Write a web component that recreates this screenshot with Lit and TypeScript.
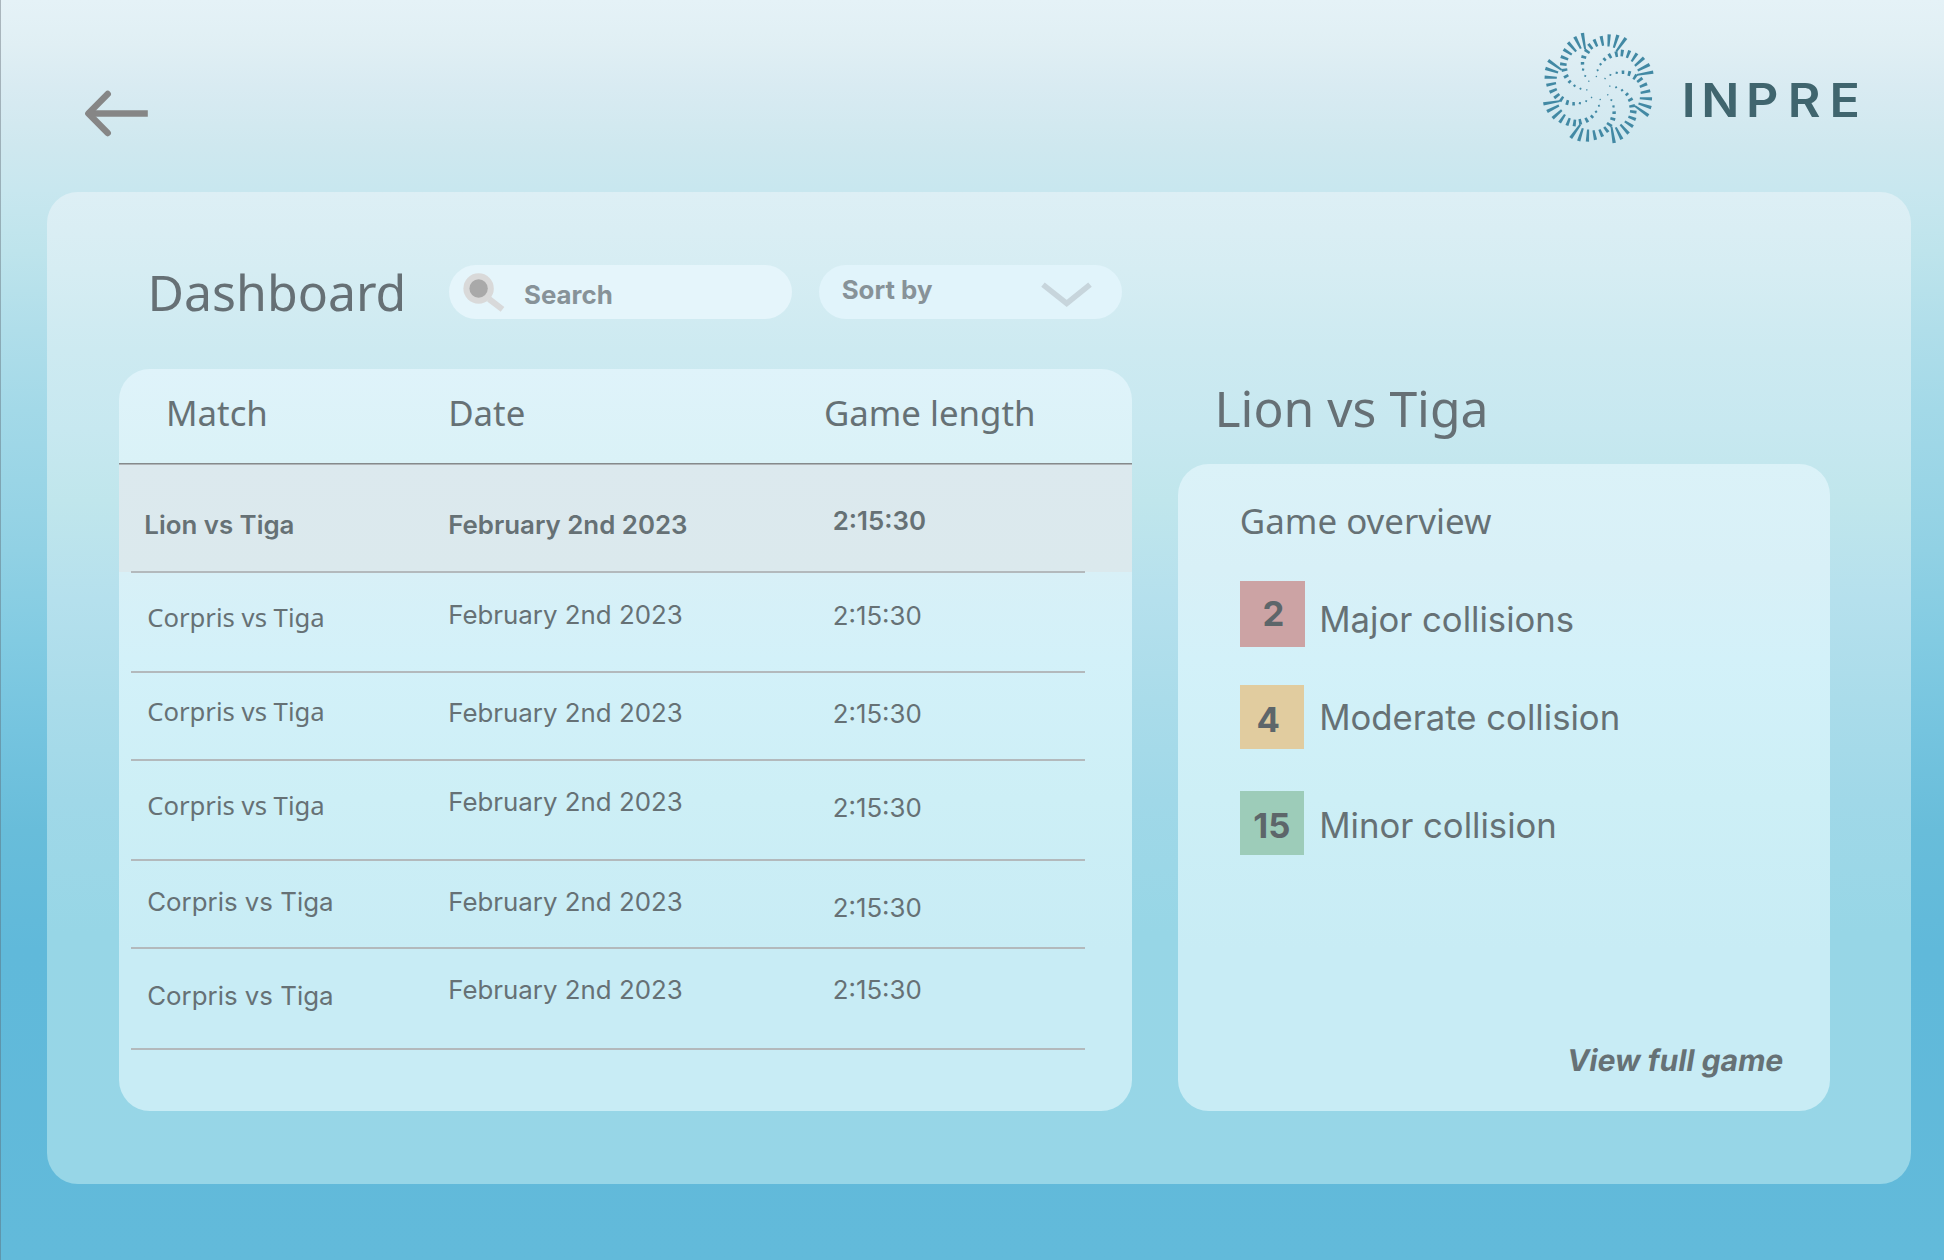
import { LitElement, html, css, svg } from "lit";
import { customElement } from "lit/decorators.js";
import { classMap } from "lit/directives/class-map.js";
import { styleMap } from "lit/directives/style-map.js";

type Cell = { text: string; drop: number; noto?: boolean };
type Row = { height: number; active?: boolean; cells: [Cell, Cell, Cell] };

const MATCH = "Corpris vs Tiga";
const DATE = "February 2nd 2023";
const TIME = "2:15:30";

const row = (height: number, m: number, d: number, t: number, noto = false): Row => ({
  height,
  cells: [
    { text: MATCH, drop: m, noto },
    { text: DATE, drop: d },
    { text: TIME, drop: t },
  ],
});

const ROWS: Row[] = [
  {
    height: 107.5,
    active: true,
    cells: [
      { text: "Lion vs Tiga", drop: 46 },
      { text: DATE, drop: 46 },
      { text: TIME, drop: 42 },
    ],
  },
  row(99, 30, 27, 28.5, true),
  row(87, 24, 25.5, 26, true),
  row(99, 30, 26, 32, true),
  row(87, 26, 26, 32),
  row(100, 32.5, 26, 26),
];

const STATS = [
  { kind: "major", count: "2", label: "Major collisions" },
  { kind: "moderate", count: "4", label: "Moderate collision" },
  { kind: "minor", count: "15", label: "Minor collision" },
];

// One arm of the swirl: [x1, y1, x2, y2, inner width, outer width], around the origin.
const ARM: number[][] = [
  [-8.9, -6.4, -10, -7.1, 1.2, 1.4],
  [-12.2, -11.8, -13.9, -12.4, 1.7, 1.9],
  [-14.1, -18.2, -16.3, -18.6, 2, 2.2],
  [-14.1, -24.7, -17.5, -24.7, 2.4, 2.7],
  [-12.1, -30.3, -16.9, -31.6, 2.5, 2.9],
  [-8.7, -35.1, -13.5, -38.3, 2.4, 3],
  [-5.9, -38.9, -9.9, -44.1, 2.5, 3.1],
  [-1.1, -41.5, -4.3, -48.7, 2.3, 3.2],
  [4.8, -42.3, 2.8, -51.9, 2.2, 3.2],
  [10.2, -41.5, 10.9, -53.7, 2.1, 3.3],
  [15.5, -40.2, 19.6, -52.9, 2.1, 3.4],
  [18, -36.6, 27.6, -50.1, 1.9, 3.4],
];

const tick = ([x1, y1, x2, y2, a, b]: number[]) => {
  const len = Math.hypot(x2 - x1, y2 - y1);
  const nx = -(y2 - y1) / len / 2;
  const ny = (x2 - x1) / len / 2;
  return [
    [x1 + nx * a, y1 + ny * a],
    [x2 + nx * b, y2 + ny * b],
    [x2 - nx * b, y2 - ny * b],
    [x1 - nx * a, y1 - ny * a],
  ]
    .map((p) => p.map((n) => n.toFixed(2)).join(","))
    .join(" ");
};

@customElement("brand-logo")
export class BrandLogo extends LitElement {
  static styles = css`
    :host {
      display: block;
    }
    svg {
      display: block;
    }
    .swirl {
      fill: #4289a4;
    }
    .word {
      font: 600 46.5px Inter, sans-serif;
      fill: #40656e;
    }
  `;

  render() {
    return html`<svg width="340" height="130" viewBox="0 0 340 130" role="img" aria-label="INPRE">
      <g class="swirl" transform="translate(58.3 68)">
        ${[0, 1, 2, 3, 4, 5, 6, 7].map(
          (i) => svg`<g transform="rotate(${i * 45})">${ARM.map((t) => svg`<polygon points=${tick(t)} />`)}</g>`
        )}
      </g>
      <text class="word" transform="scale(1.08 1)" x="131.3 149.2 190.8 229.5 268" y="97">INPRE</text>
    </svg>`;
  }
}

@customElement("match-table")
export class MatchTable extends LitElement {
  static styles = css`
    :host {
      display: block;
      box-sizing: border-box;
      width: 1013.5px;
      height: 742.8px;
      border-radius: 31px;
      overflow: hidden;
      background: linear-gradient(#dff3fa 0, #daf2f7 92px, #d8f0f7 200px, #d3f1f9 290px, #cdeff6 430px, #c8ecf5 580px, #c8ecf5 743px);
      color: #667175;
    }
    .head,
    .row {
      display: grid;
      grid-template-columns: 329.7px 384.5px 1fr;
      box-sizing: border-box;
    }
    .head {
      position: relative;
      height: 95.5px;
      border-bottom: 1px solid #858a8c;
      box-shadow: 0 1px #b0b5b8;
      padding-top: 20px;
      font: 400 34.8px/48px "Noto Sans", sans-serif;
    }
    .head .match {
      padding-left: 47.5px;
    }
    .head .length {
      margin-left: -8.8px;
    }
    .row {
      font: 400 25.85px/30px Inter, sans-serif;
    }
    .row .match {
      padding-left: 28.7px;
    }
    .active {
      background: linear-gradient(#dce9ee, #dbe9ed);
      font-weight: 600;
    }
    .active .match {
      padding-left: 25.8px;
    }
    .row .noto {
      font-family: "Noto Sans", sans-serif;
      font-size: 25.7px;
    }
    .rule {
      height: 2px;
      margin: -1px 47.5px 0 12.5px;
      background: #b3b9bc;
      position: relative;
    }
  `;

  render() {
    const names = ["match", "date", "length"];
    return html`
      <div class="head">
        <span class="match">Match</span><span class="date">Date</span><span class="length">Game length</span>
      </div>
      ${ROWS.map(
        (r) => html`
          <div class=${classMap({ row: true, active: !!r.active })} style=${styleMap({ height: `${r.height}px` })}>
            ${r.cells.map(
              (c, j) => html`<span
                class=${classMap({ [names[j]]: true, noto: !!c.noto })}
                style=${styleMap({ paddingTop: `${c.drop}px` })}
                >${c.text}</span
              >`
            )}
          </div>
          <div class="rule"></div>
        `
      )}
    `;
  }
}

@customElement("game-overview")
export class GameOverview extends LitElement {
  static styles = css`
    :host {
      display: flex;
      flex-direction: column;
      box-sizing: border-box;
      width: 652px;
      height: 647.2px;
      border-radius: 31px;
      padding: 32.8px 46px 0 62.3px;
      background: linear-gradient(#dbf2f8 0, #d8f0f7 105px, #d3f1f9 195px, #cdeff6 335px, #c8ecf5 485px, #c8ecf5 647px);
      color: #667175;
    }
    .title {
      font: 400 34.9px/48px "Noto Sans", sans-serif;
      height: 84.2px;
    }
    .stat {
      display: flex;
      font: 400 34.7px/42px Inter, sans-serif;
    }
    .count {
      box-sizing: border-box;
      width: 64px;
      height: 64px;
      font-weight: 700;
      text-align: center;
      color: #5d666a;
    }
    .major {
      height: 103.5px;
    }
    .major .count {
      width: 65.4px;
      height: 65.6px;
      background: #cca3a4;
      padding: 11px 0 0 2px;
    }
    .major .label {
      padding: 17px 0 0 14px;
    }
    .moderate {
      height: 106.5px;
    }
    .moderate .count {
      background: #e1cc9f;
      padding: 13px 7px 0 0;
    }
    .moderate .label {
      padding: 11px 0 0 15.4px;
    }
    .minor .count {
      background: #9dccb9;
      padding: 13px 0 0 0;
    }
    .minor .label {
      padding: 13px 0 0 15.4px;
    }
    .link {
      margin: auto 0 33px;
      text-align: right;
      font: 700 30px/36px Inter, sans-serif;
      transform: skewX(-9.4deg);
    }
  `;

  render() {
    return html`
      <div class="title">Game overview</div>
      ${STATS.map(
        (s) => html`<div class="stat ${s.kind}">
          <span class="count">${s.count}</span><span class="label">${s.label}</span>
        </div>`
      )}
      <div class="link">View full game</div>
    `;
  }
}

@customElement("app-root")
export class AppRoot extends LitElement {
  static styles = css`
    :host {
      display: block;
    }
    .page {
      box-sizing: border-box;
      width: 1944px;
      height: 1260px;
      overflow: hidden;
      border-left: 1px solid rgba(90, 100, 110, 0.42);
      background: linear-gradient(
        #e5f2f7 0,
        #e0eff4 45px,
        #d9ebf2 85px,
        #cfe8ef 145px,
        #c8e7ef 190px,
        #bee4ec 250px,
        #b0deea 330px,
        #a3d9e8 410px,
        #91d1e4 550px,
        #82cbe2 640px,
        #75c4df 730px,
        #68bdda 830px,
        #60b9da 950px,
        #62bada 1260px
      );
      background-origin: border-box;
    }
    .top {
      display: flex;
      justify-content: space-between;
      height: 192.3px;
      padding: 0 64px 0 83px;
    }
    .back {
      margin-top: 89px;
    }
    .logo {
      margin-top: 20px;
    }
    .panel {
      box-sizing: border-box;
      display: flex;
      gap: 45.5px;
      width: 1864.2px;
      height: 992.2px;
      margin-left: 46px;
      padding-left: 71.5px;
      border-radius: 31px;
      color: #667075;
      background: linear-gradient(#ddeff5 0, #d6edf3 78px, #cdeaf1 158px, #c7e8f0 238px, #c0e6ec 308px, #b5e0ed 408px, #aadcea 508px, #a0d8e8 608px, #97d6e6 740px, #97d6e7 992px);
    }
    .bar {
      box-sizing: border-box;
      display: flex;
      height: 176.4px;
      padding: 73.2px 0 0 29px;
    }
    h1,
    h2 {
      margin: 0;
      font: 400 50px/60px "Noto Sans", sans-serif;
    }
    h1 {
      width: 301px;
      margin-top: -3px;
    }
    h2 {
      box-sizing: border-box;
      height: 272px;
      padding: 185.5px 0 0 37px;
      font-size: 49.8px;
    }
    .pill {
      box-sizing: border-box;
      display: flex;
      height: 53.4px;
      border-radius: 27px;
      font: 700 25.85px/30px Inter, sans-serif;
      color: #879298;
    }
    .search {
      width: 343.4px;
      margin-right: 27.5px;
      padding-left: 14.8px;
      background: #e5f5fb;
    }
    .search span {
      padding: 14.5px 0 0 16.7px;
    }
    .search svg {
      margin-top: 7.2px;
    }
    .sort {
      justify-content: space-between;
      width: 302.2px;
      padding: 0 30px 0 22.3px;
      background: #e1f4fb;
    }
    .sort span {
      padding-top: 10px;
    }
    .sort svg {
      margin-top: 16px;
    }
    .right {
      display: flex;
      flex-direction: column;
    }
  `;

  render() {
    return html`<div class="page">
      <header class="top">
        <svg class="back" width="66" height="50" viewBox="0 0 66 50" fill="none" stroke="#868686" stroke-width="6.5">
          <path d="M6 24.5H63.8" />
          <path d="M23.7 5 4.4 24.5 23.7 44" stroke-linecap="round" stroke-linejoin="round" />
        </svg>
        <brand-logo class="logo"></brand-logo>
      </header>
      <main class="panel">
        <section>
          <div class="bar">
            <h1>Dashboard</h1>
            <div class="pill search">
              <svg width="44" height="40" viewBox="0 0 44 40">
                <path d="M26 26 39.5 36.4" stroke="#d8d9da" stroke-width="6" />
                <circle cx="15.6" cy="15.5" r="15.2" fill="#d9d9d9" />
                <circle cx="15.6" cy="15.5" r="9.2" fill="#a9a9a9" />
              </svg>
              <span>Search</span>
            </div>
            <div class="pill sort">
              <span>Sort by</span>
              <svg width="51" height="28" viewBox="0 0 51 28" fill="none" stroke="#c7d5dc" stroke-width="5.6">
                <path d="M2 3.6 25.7 22.4 49 3.6" />
              </svg>
            </div>
          </div>
          <match-table></match-table>
        </section>
        <section class="right">
          <h2>Lion vs Tiga</h2>
          <game-overview></game-overview>
        </section>
      </main>
    </div>`;
  }
}
